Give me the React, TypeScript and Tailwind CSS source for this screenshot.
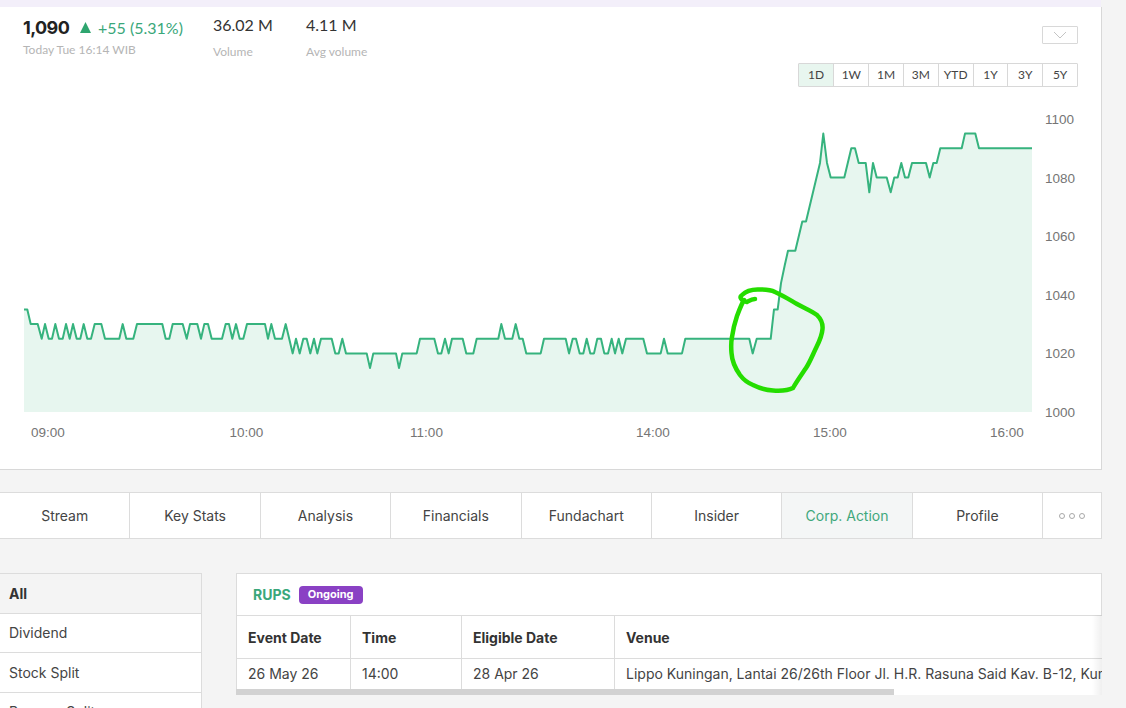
const tabs = ["Stream", "Key Stats", "Analysis", "Financials", "Fundachart", "Insider", "Corp. Action", "Profile"];
const ranges = ["1D", "1W", "1M", "3M", "YTD", "1Y", "3Y", "5Y"];
const sideItems = ["All", "Dividend", "Stock Split", "Reverse Split"];

const yOf = (price: number) => 412 - (price - 1000) * 2.93;

// [x, price] read off the chart, split in three runs
const morning: number[][] = [[72,1035],[82,1035],[92,1030],[113,1030],[125,1025],[135,1030],[146,1025],[156,1025],[166,1030],[177,1025],[188,1025],[198,1030],[209,1025],[219,1030],[230,1025],[241,1025],[251,1030],[262,1025],[273,1025],[284,1030],[304,1030],[315,1025],[358,1025],[368,1030],[379,1025],[400,1025],[411,1030],[487,1030],[497,1025],[508,1025],[518,1030],[548,1030],[560,1025],[570,1030],[592,1030],[603,1025],[613,1030],[624,1030],[635,1025],[666,1025],[677,1030],[687,1030],[697,1025],[708,1030],[719,1025],[730,1025],[741,1030],[795,1030],[804,1025],[814,1030],[825,1025],[846,1025],[857,1030],[878,1020],[888,1025],[899,1020],[910,1025],[920,1025],[931,1020],[942,1025],[952,1020],[963,1025],[995,1025],[1006,1020],[1016,1020],[1027,1025],[1038,1020],[1100,1020]];
const midday: number[][] = [[0,1015],[10,1020],[78,1020],[87,1015],[97,1020],[140,1020],[150,1025],[193,1025],[204,1020],[214,1020],[225,1025],[236,1020],[246,1025],[278,1025],[289,1020],[310,1020],[320,1025],[385,1025],[394,1030],[405,1025],[427,1025],[437,1030],[448,1025],[458,1025],[469,1020],[512,1020],[522,1025],[587,1025],[597,1020],[608,1025],[618,1025],[629,1020],[640,1020],[650,1025],[661,1020],[672,1020],[682,1025],[693,1025],[703,1020],[714,1020],[725,1025],[735,1020],[746,1025],[757,1020],[768,1025],[820,1025],[831,1020],[872,1020],[882,1025],[893,1020],[936,1020],[946,1025],[1100,1025]];
const closing: number[][] = [[148,1025],[158,1020],[170,1025],[212,1025],[222,1035],[233,1035],[243,1044],[254,1050],[264,1055],[286,1055],[307,1065],[318,1065],[360,1085],[370,1095],[381,1085],[392,1080],[433,1080],[454,1090],[465,1090],[476,1085],[497,1085],[508,1075],[519,1085],[530,1080],[560,1080],[572,1075],[583,1080],[593,1080],[604,1085],[615,1080],[625,1080],[636,1085],[678,1085],[689,1080],[700,1085],[710,1085],[721,1090],[785,1090],[795,1095],[826,1095],[837,1090],[996,1090]];

const points = [
  ...morning.map(([x, p]) => [x / 3, yOf(p)]),
  ...midday.map(([x, p]) => [370 + x / 3, yOf(p)]),
  ...closing.map(([x, p]) => [700 + x / 3, yOf(p)]),
];
const line = points.map(([x, y], i) => `${i ? "L" : "M"}${x.toFixed(1)} ${y.toFixed(1)}`).join(" ");
const area = `${line} L1032 412 L24 412 Z`;

const yLabels = [1100, 1080, 1060, 1040, 1020, 1000];
const xLabels: [string, number][] = [["09:00", 48], ["10:00", 246.5], ["11:00", 426.5], ["14:00", 653], ["15:00", 830], ["16:00", 1007]];

function Chart() {
  return (
    <svg viewBox="0 88 1100 357" className="block w-[1100px] h-[357px]">
      <path d={area} fill="#e7f6ef" />
      <path d={line} fill="none" stroke="#36b37e" strokeWidth="2" strokeLinejoin="round" />
      {yLabels.map((v) => (
        <text key={v} x="1045" y={yOf(v) + 5} fontSize="13.5" fill="#757575" fontFamily="'Liberation Sans', sans-serif">{v}</text>
      ))}
      {xLabels.map(([t, x]) => (
        <text key={t} x={x} y="437" fontSize="13.5" textAnchor="middle" fill="#757575" fontFamily="'Liberation Sans', sans-serif">{t}</text>
      ))}
      <path
        d="M755 299 C751 299 749 301 747 302 C741 301 739 297 742 295 C746 291 752 289 760 289.5 C767 289.5 771 290 775 292 C782 295 790 300 797 304 C804 308 812 311 817 315 C821 319 823 324 822.5 329 C822 336 819 342 816.5 347 C813 354 810 362 806 368 C802 374 797 381 793 388 C787 391 780 391 773 390.5 C766 390 759 388 753 385 C748 383 743 379 740 375 C735 368 732 361 731.5 353 C731 347 731 342 732 337 C733 329 735 322 737 316 C739 311 741 305 744 300"
        fill="none"
        stroke="#25dd00"
        strokeWidth="4.5"
        strokeLinecap="round"
      />
    </svg>
  );
}

export default function App() {
  return (
    <div className="w-[1126px] h-[708px] overflow-hidden bg-[#f4f4f4] font-['Inter',sans-serif]">
      <div className="w-[1101px] h-[7px] bg-[#f3effa]" />

      <section className="w-[1102px] h-[463px] bg-white border-r border-b border-[#d8d8d8]">
        <div className="flex justify-between pl-[23px] pr-[23px] pt-[8px] h-[56px]">
          <div className="flex font-['Lato',sans-serif]">
            <div className="w-[190px]">
              <div className="flex items-center h-[23px] mt-[1px]">
                <span className="text-[18px] font-bold text-[#222] w-[57px] font-['Inter',sans-serif] tracking-[-0.6px]">1,090</span>
                <svg width="11" height="11" viewBox="0 0 11 11" className="mr-[7px]"><path d="M5.5 0 L11 11 L0 11 Z" fill="#2ea56f" /></svg>
                <span className="text-[16px] text-[#3aa77a] whitespace-nowrap">+55 (5.31%)</span>
              </div>
              <div className="text-[12px] text-[#b5b5b5] mt-[2px] whitespace-nowrap">Today Tue 16:14 WIB</div>
            </div>
            <div className="w-[93px]">
              <div className="text-[16px] text-[#333] h-[19px] leading-[19px]">36.02 M</div>
              <div className="text-[12px] text-[#b5b5b5] mt-[9px]">Volume</div>
            </div>
            <div>
              <div className="text-[16px] text-[#333] h-[19px] leading-[19px]">4.11 M</div>
              <div className="text-[12px] text-[#b5b5b5] mt-[9px]">Avg volume</div>
            </div>
          </div>
          <div className="w-[36px] h-[18px] mt-[11px] border border-[#d8d8d8] rounded-[1px] flex items-center justify-center">
            <svg width="14" height="8" viewBox="0 0 14 8"><path d="M1 1 L7 7 L13 1" fill="none" stroke="#c4c4c4" strokeWidth="1" /></svg>
          </div>
        </div>

        <div className="flex justify-end pr-[23px] h-[25px] font-['Lato',sans-serif]">
          <div className="flex h-[24px] border border-[#d8d8d8] rounded-[1px]">
            {ranges.map((r, i) => (
              <div
                key={r}
                className={`w-[34.8px] flex items-center justify-center text-[12px] text-[#444] ${i ? "border-l border-[#d8d8d8]" : ""} ${r === "1D" ? "bg-[#e8f6ef]" : ""}`}
              >
                {r}
              </div>
            ))}
          </div>
        </div>

        <Chart />
      </section>

      <nav className="mt-[22px] w-[1102px] h-[47px] flex bg-white border-y border-r border-[#dcdcdc] text-[14px] text-[#444]">
        {tabs.map((t) => (
          <div
            key={t}
            className={`w-[130.4px] shrink-0 flex items-center justify-center border-r border-[#dcdcdc] ${t === "Corp. Action" ? "bg-[#f4f6f6] text-[#3fa87c]" : ""}`}
          >
            {t}
          </div>
        ))}
        <div className="flex-1 flex items-center justify-center gap-[4px] pt-[1px]">
          <span className="w-[6px] h-[6px] rounded-full border border-[#a8a8a8]" />
          <span className="w-[6px] h-[6px] rounded-full border border-[#a8a8a8]" />
          <span className="w-[6px] h-[6px] rounded-full border border-[#a8a8a8]" />
        </div>
      </nav>

      <div className="mt-[34px] flex gap-[34px] items-start w-[1102px]">
        <aside className="w-[202px] shrink-0 bg-white border-t border-r border-[#dcdcdc] text-[14px] text-[#444]">
          {sideItems.map((s) => (
            <div
              key={s}
              className={`h-[39.5px] pl-[9px] flex items-center border-b border-[#dcdcdc] ${s === "All" ? "bg-[#f4f4f4] font-bold text-[#333]" : ""}`}
            >
              {s}
            </div>
          ))}
        </aside>

        <div className="relative flex-1 min-w-0 overflow-hidden">
          <div className="bg-white border border-[#dcdcdc] border-b-0 h-[42px] pl-[16px] flex items-center gap-[8px]">
            <span className="text-[14px] font-bold text-[#3aa77a]">RUPS</span>
            <span className="h-[18px] px-[9px] rounded-[4px] bg-[#8a41c4] text-white text-[11px] font-bold flex items-center">Ongoing</span>
          </div>
          <table className="w-full table-fixed bg-white border-collapse text-[14px] text-[#444]">
            <colgroup>
              <col className="w-[114px]" />
              <col className="w-[111px]" />
              <col className="w-[153px]" />
              <col />
            </colgroup>
            <thead>
              <tr className="h-[43px] border-y border-[#dcdcdc] text-left font-bold text-[#333]">
                <th className="pl-[11px] border-l border-[#dcdcdc] font-bold">Event Date</th>
                <th className="pl-[11px] border-l border-[#dcdcdc] font-bold">Time</th>
                <th className="pl-[11px] border-l border-[#dcdcdc] font-bold">Eligible Date</th>
                <th className="pl-[11px] border-l border-[#dcdcdc] font-bold">Venue</th>
              </tr>
            </thead>
            <tbody>
              <tr className="h-[30px]">
                <td className="pl-[11px] border-l border-[#dcdcdc]">26 May 26</td>
                <td className="pl-[11px] border-l border-[#dcdcdc]">14:00</td>
                <td className="pl-[11px] border-l border-[#dcdcdc]">28 Apr 26</td>
                <td className="pl-[11px] border-l border-[#dcdcdc] whitespace-nowrap overflow-hidden">Lippo Kuningan, Lantai 26/26th Floor Jl. H.R. Rasuna Said Kav. B-12, Kuningan</td>
              </tr>
            </tbody>
          </table>
          <div className="h-[6px] bg-white">
            <div className="w-[658px] h-full bg-[#d2d2d2]" />
          </div>
          <div className="absolute right-0 top-[42px] bottom-0 w-[10px] bg-gradient-to-l from-[#00000010] to-transparent" />
        </div>
      </div>
    </div>
  );
}
